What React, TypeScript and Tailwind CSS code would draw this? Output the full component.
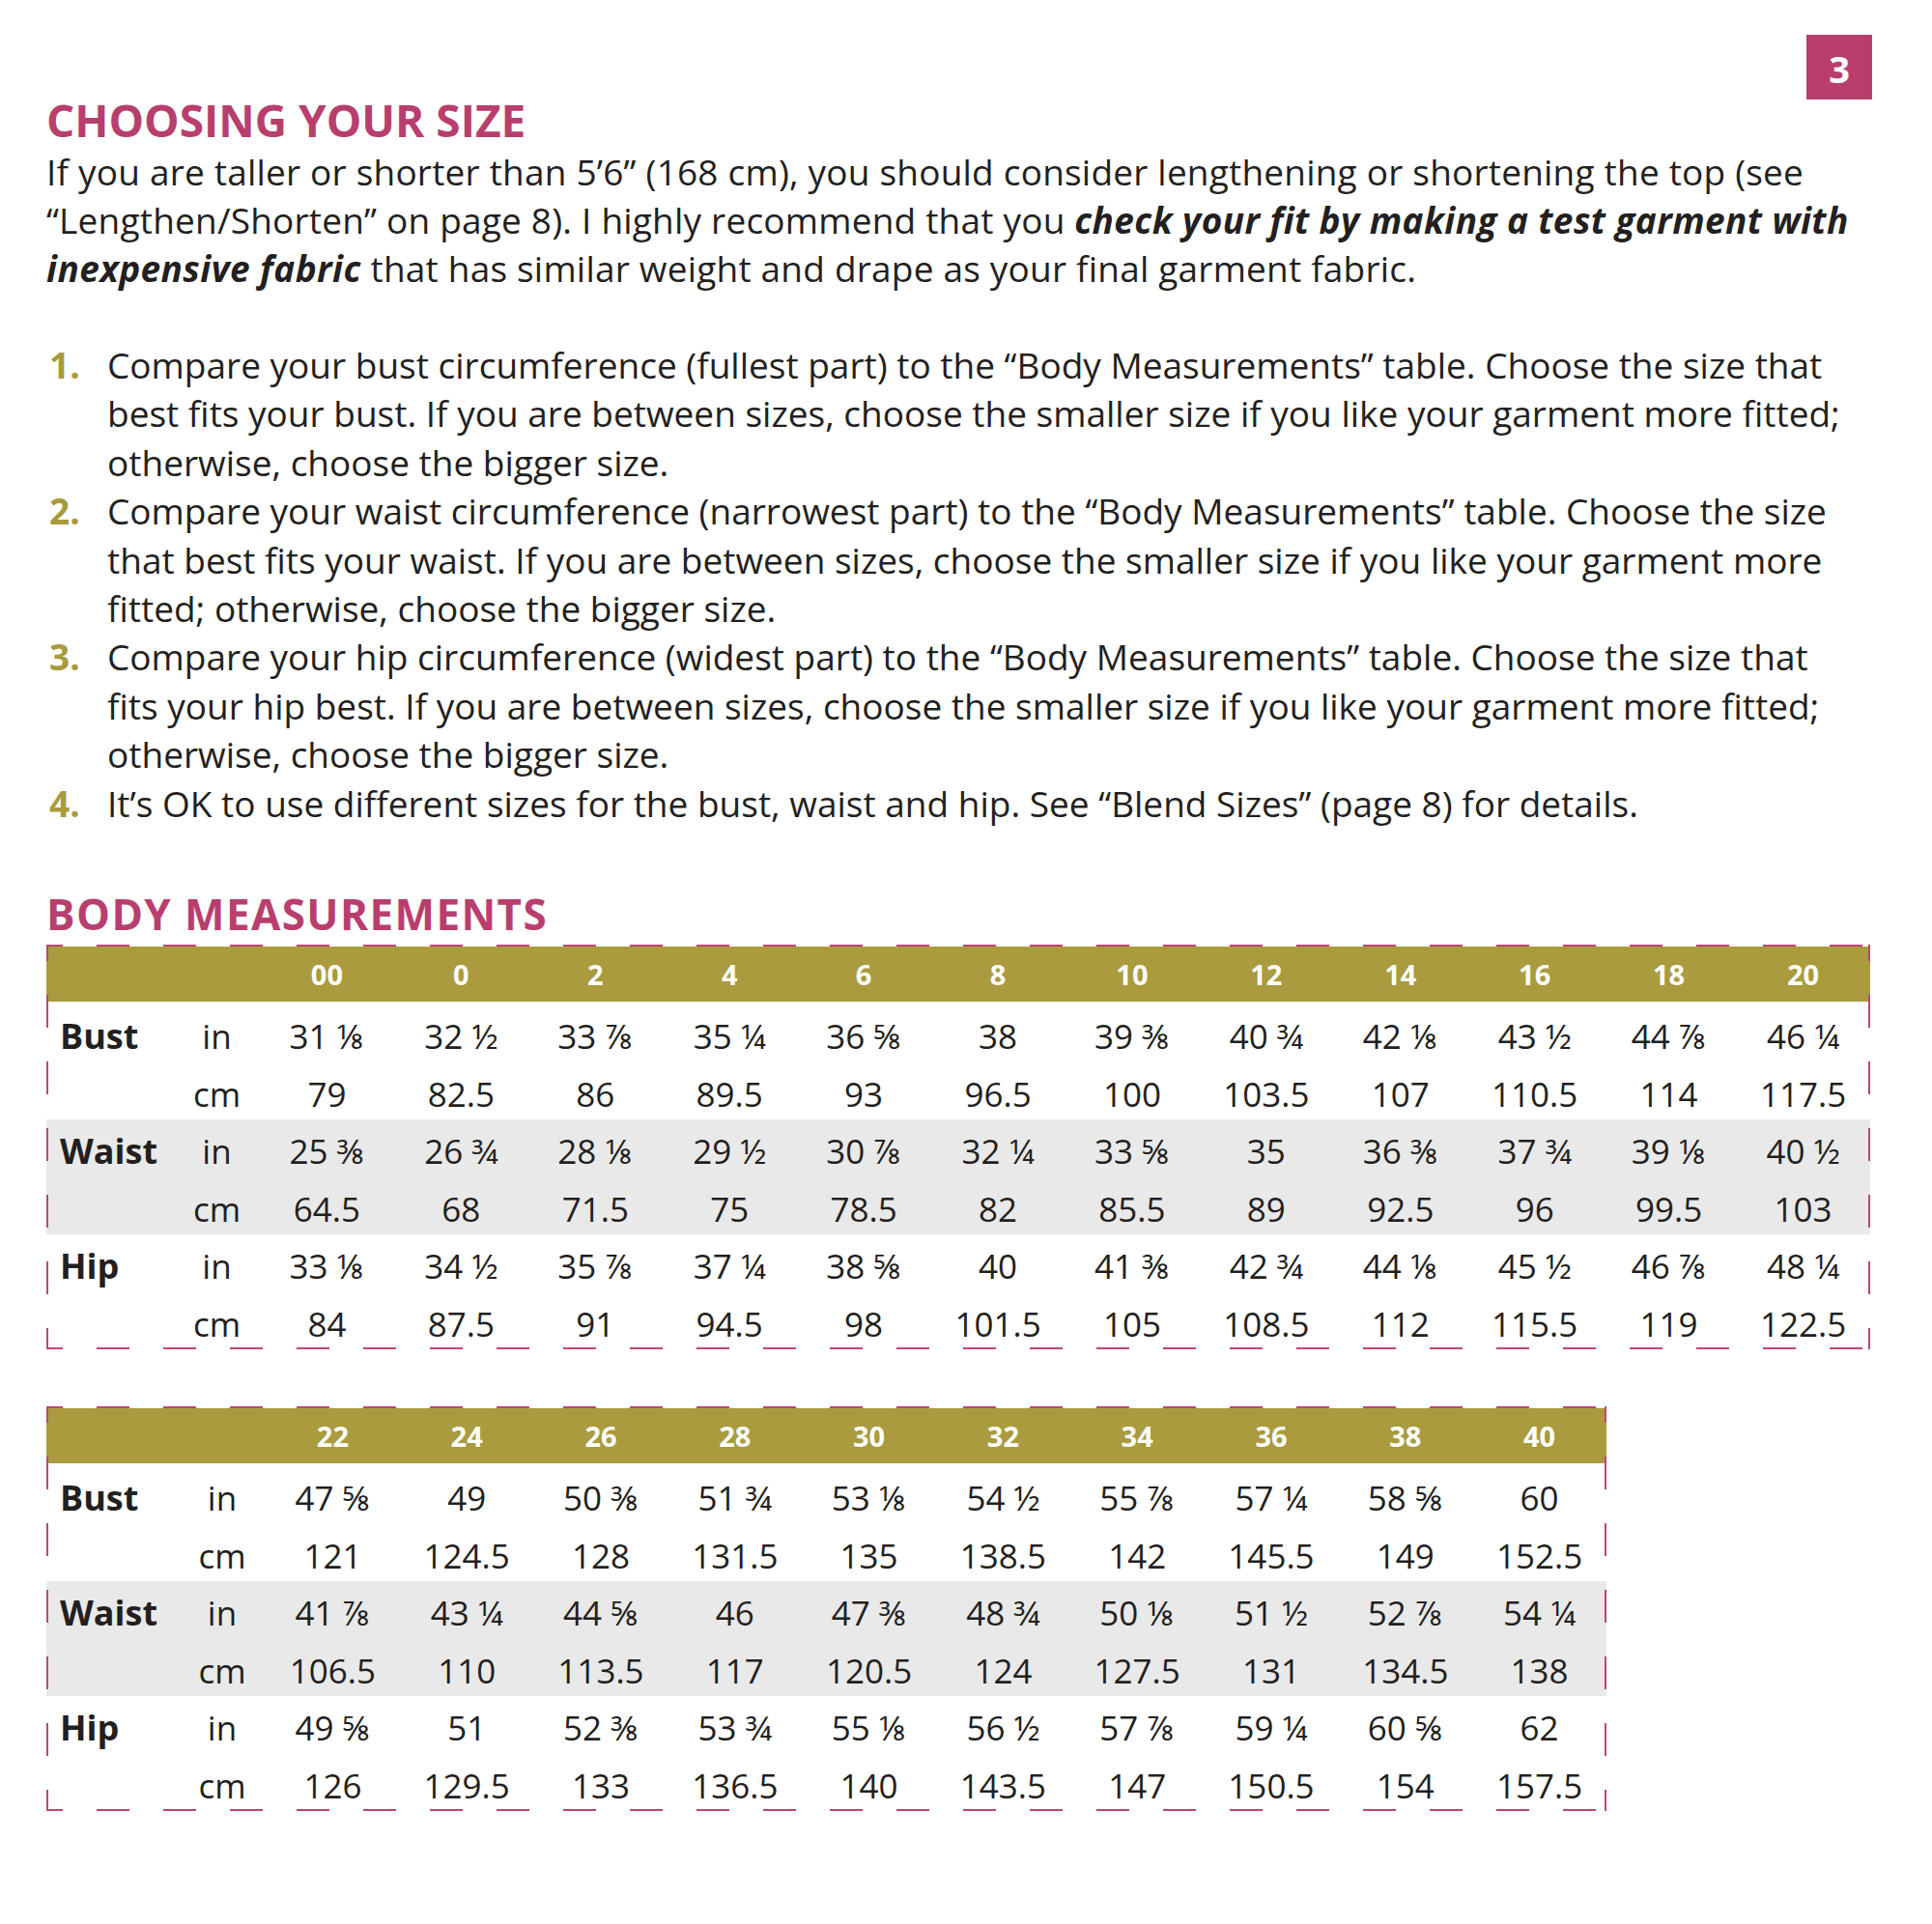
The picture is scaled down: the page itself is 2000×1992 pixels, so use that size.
import React from "react";

type Row = { name: string; unit: string; values: string[] };

const table1Sizes = ["00", "0", "2", "4", "6", "8", "10", "12", "14", "16", "18", "20"];
const table1Rows: Row[] = [
  { name: "Bust", unit: "in", values: ["31 ⅛", "32 ½", "33 ⅞", "35 ¼", "36 ⅝", "38", "39 ⅜", "40 ¾", "42 ⅛", "43 ½", "44 ⅞", "46 ¼"] },
  { name: "", unit: "cm", values: ["79", "82.5", "86", "89.5", "93", "96.5", "100", "103.5", "107", "110.5", "114", "117.5"] },
  { name: "Waist", unit: "in", values: ["25 ⅜", "26 ¾", "28 ⅛", "29 ½", "30 ⅞", "32 ¼", "33 ⅝", "35", "36 ⅜", "37 ¾", "39 ⅛", "40 ½"] },
  { name: "", unit: "cm", values: ["64.5", "68", "71.5", "75", "78.5", "82", "85.5", "89", "92.5", "96", "99.5", "103"] },
  { name: "Hip", unit: "in", values: ["33 ⅛", "34 ½", "35 ⅞", "37 ¼", "38 ⅝", "40", "41 ⅜", "42 ¾", "44 ⅛", "45 ½", "46 ⅞", "48 ¼"] },
  { name: "", unit: "cm", values: ["84", "87.5", "91", "94.5", "98", "101.5", "105", "108.5", "112", "115.5", "119", "122.5"] },
];

const table2Sizes = ["22", "24", "26", "28", "30", "32", "34", "36", "38", "40"];
const table2Rows: Row[] = [
  { name: "Bust", unit: "in", values: ["47 ⅝", "49", "50 ⅜", "51 ¾", "53 ⅛", "54 ½", "55 ⅞", "57 ¼", "58 ⅝", "60"] },
  { name: "", unit: "cm", values: ["121", "124.5", "128", "131.5", "135", "138.5", "142", "145.5", "149", "152.5"] },
  { name: "Waist", unit: "in", values: ["41 ⅞", "43 ¼", "44 ⅝", "46", "47 ⅜", "48 ¾", "50 ⅛", "51 ½", "52 ⅞", "54 ¼"] },
  { name: "", unit: "cm", values: ["106.5", "110", "113.5", "117", "120.5", "124", "127.5", "131", "134.5", "138"] },
  { name: "Hip", unit: "in", values: ["49 ⅝", "51", "52 ⅜", "53 ¾", "55 ⅛", "56 ½", "57 ⅞", "59 ¼", "60 ⅝", "62"] },
  { name: "", unit: "cm", values: ["126", "129.5", "133", "136.5", "140", "143.5", "147", "150.5", "154", "157.5"] },
];

function DashedFrame() {
  return (
    <svg className="pointer-events-none absolute inset-0 h-full w-full overflow-visible" aria-hidden="true">
      <g stroke="#bc4676" strokeWidth="2" strokeDasharray="34 35" strokeDashoffset="17" fill="none">
        <line x1="0" y1="1" x2="100%" y2="1" />
        <line x1="0" y1="calc(100% - 1px)" x2="100%" y2="calc(100% - 1px)" />
        <line x1="1" y1="0" x2="1" y2="100%" />
        <line x1="calc(100% - 1px)" y1="0" x2="calc(100% - 1px)" y2="100%" />
      </g>
    </svg>
  );
}

function SizeTable({
  sizes,
  rows,
  widthClass,
  gridClass,
}: {
  sizes: string[];
  rows: Row[];
  widthClass: string;
  gridClass: string;
}) {
  const groups = [rows.slice(0, 2), rows.slice(2, 4), rows.slice(4, 6)];
  return (
    <div className={`relative ${widthClass} pt-[2px]`}>
      <div className={`grid ${gridClass} h-[57px] bg-[#a99b3e]`}>
        <div />
        <div />
        {sizes.map((s) => (
          <div key={s} className="text-center text-[29px] font-bold leading-[57px] text-white">
            {s}
          </div>
        ))}
      </div>
      <div className="h-[3px]" />
      {groups.map((g, gi) => (
        <div key={gi} className={gi === 1 ? "bg-[#e9e9e9]" : ""}>
          {g.map((r, ri) => (
            <div key={ri} className={`grid ${gridClass} h-[59.5px]`}>
              <div className="h-[59.5px] pl-[14px] text-[36px] font-bold leading-[66px]">{r.name}</div>
              <div className="h-[59.5px] text-center text-[35px] leading-[66px]">{r.unit}</div>
              {r.values.map((v, vi) => (
                <div key={vi} className="h-[59.5px] whitespace-nowrap text-center text-[35px] leading-[66px]">
                  {v}
                </div>
              ))}
            </div>
          ))}
        </div>
      ))}
      <DashedFrame />
    </div>
  );
}

const listItems: { n: string; lines: string[] }[] = [
  {
    n: "1.",
    lines: [
      "Compare your bust circumference (fullest part) to the “Body Measurements” table. Choose the size that",
      "best fits your bust. If you are between sizes, choose the smaller size if you like your garment more fitted;",
      "otherwise, choose the bigger size.",
    ],
  },
  {
    n: "2.",
    lines: [
      "Compare your waist circumference (narrowest part) to the “Body Measurements” table. Choose the size",
      "that best fits your waist. If you are between sizes, choose the smaller size if you like your garment more",
      "fitted; otherwise, choose the bigger size.",
    ],
  },
  {
    n: "3.",
    lines: [
      "Compare your hip circumference (widest part) to the “Body Measurements” table. Choose the size that",
      "fits your hip best. If you are between sizes, choose the smaller size if you like your garment more fitted;",
      "otherwise, choose the bigger size.",
    ],
  },
  {
    n: "4.",
    lines: ["It’s OK to use different sizes for the bust, waist and hip. See “Blend Sizes” (page 8) for details."],
  },
];

export default function App() {
  return (
    <div className="min-h-[1992px] w-[2000px] bg-white pl-[48px] pr-[62px] pt-[36px] font-['Open_Sans',sans-serif] text-[#231f20]">
      <div className="flex items-start justify-between">
        <h1 className="mt-[65px] text-[46px] font-bold leading-[46px] text-[#b83f6d]">CHOOSING YOUR SIZE</h1>
        <div className="flex h-[67px] w-[68px] items-center justify-center bg-[#b83f6d] pt-[3px] text-[38px] font-bold leading-none text-white">
          3
        </div>
      </div>

      <div className="mt-[6px] text-[37px] leading-[50px] tracking-[0.2px]">
        <div className="whitespace-nowrap">
          If you are taller or shorter than 5’6” (168 cm), you should consider lengthening or shortening the top (see
        </div>
        <div className="whitespace-nowrap">
          “Lengthen/Shorten” on page 8). I highly recommend that you{" "}
          <strong className="font-bold italic tracking-[0.4px]">check your fit by making a test garment with</strong>
        </div>
        <div className="whitespace-nowrap">
          <strong className="font-bold italic tracking-[0.4px]">inexpensive fabric</strong> that has similar weight and
          drape as your final garment fabric.
        </div>
      </div>

      <ol className="mt-[50px] text-[37px] leading-[50.4px]">
        {listItems.map((it) => (
          <li key={it.n} className="flex">
            <span className="w-[63px] shrink-0 pl-[3px] font-bold text-[#a89a3d]">{it.n}</span>
            <div>
              {it.lines.map((l, i) => (
                <div key={i} className="whitespace-nowrap">
                  {l}
                </div>
              ))}
            </div>
          </li>
        ))}
      </ol>

      <h2 className="mt-[67px] text-[44px] font-bold leading-[44px] tracking-[1.4px] text-[#b83f6d]">
        BODY MEASUREMENTS
      </h2>

      <div className="mt-[10px]">
        <SizeTable
          sizes={table1Sizes}
          rows={table1Rows}
          widthClass="w-[1888px]"
          gridClass="grid-cols-[132px_89px_repeat(12,minmax(0,1fr))]"
        />
      </div>

      <div className="mt-[59px]">
        <SizeTable
          sizes={table2Sizes}
          rows={table2Rows}
          widthClass="w-[1615px]"
          gridClass="grid-cols-[137px_90px_repeat(10,minmax(0,1fr))]"
        />
      </div>
    </div>
  );
}
